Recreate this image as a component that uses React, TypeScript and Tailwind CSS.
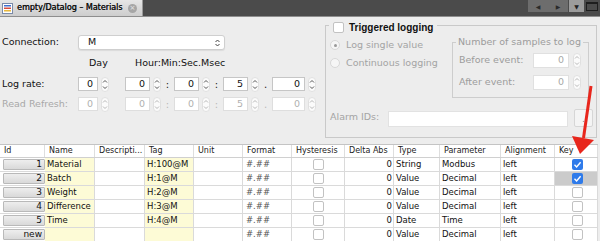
import React from "react";

type Row = {
    id: string;
    name: string;
    tag: string;
    type: string;
    param: string;
    key?: boolean;
    selected?: boolean;
};

const rows: Row[] = [
    { id: "1", name: "Material", tag: "H:100@M", type: "String", param: "Modbus", key: true },
    { id: "2", name: "Batch", tag: "H:1@M", type: "Value", param: "Decimal", key: true, selected: true },
    { id: "3", name: "Weight", tag: "H:2@M", type: "Value", param: "Decimal" },
    { id: "4", name: "Difference", tag: "H:3@M", type: "Value", param: "Decimal" },
    { id: "5", name: "Time", tag: "H:4@M", type: "Date", param: "Time" },
    { id: "new", name: "", tag: "", type: "Value", param: "Decimal" },
];

const headers = ["Id", "Name", "Descripti...", "Tag", "Unit", "Format", "Hysteresis", "Delta Abs", "Type", "Parameter", "Alignment", "Key"];

const gridCols = "grid grid-cols-[45px_50px_50px_49px_49px_49px_53px_49px_46px_61px_54px_43px]";

function Arrows({ disabled }: { disabled?: boolean }) {
    const c = disabled ? "#b8b8b8" : "#555";
    return (
        <svg width="8" height="15" viewBox="0 0 8 15" className="shrink-0">
            <rect x="0.5" y="0.5" width="7" height="14" rx="3.5" fill="#fbfbfb" stroke="#e0e0e0" />
            <path d="M2 5.5 L4 3.5 L6 5.5" fill="none" stroke={c} strokeWidth="1" />
            <path d="M2 9.5 L4 11.5 L6 9.5" fill="none" stroke={c} strokeWidth="1" />
        </svg>
    );
}

function Spin({ value, w, disabled }: { value: string; w: string; disabled?: boolean }) {
    return (
        <div className="flex items-center gap-[3px]">
            <div
                className={`${w} h-[14px] bg-white border flex items-center justify-end pr-[4px] text-[9.5px] ${
                    disabled ? "border-[#dedede] text-[#b0b0b0]" : "border-[#c6c6c6] text-[#111]"
                }`}
            >
                {value}
            </div>
            <Arrows disabled={disabled} />
        </div>
    );
}

function Sep({ ch, disabled }: { ch: string; disabled?: boolean }) {
    return (
        <div className={`w-[13px] text-center text-[10px] ${disabled ? "text-[#b8b8b8]" : "text-[#222]"}`}>{ch}</div>
    );
}

function RateRow({ label, disabled }: { label: string; disabled?: boolean }) {
    return (
        <div className="flex items-center h-[14px]">
            <div className={`w-[76px] text-[9.5px] ${disabled ? "text-[#a8a8a8]" : "text-[#111]"}`}>{label}</div>
            <Spin value="0" w="w-[20px]" disabled={disabled} />
            <div className="w-[16px]" />
            <Spin value="0" w="w-[25px]" disabled={disabled} />
            <Sep ch=":" disabled={disabled} />
            <Spin value="0" w="w-[25px]" disabled={disabled} />
            <Sep ch=":" disabled={disabled} />
            <Spin value="5" w="w-[25px]" disabled={disabled} />
            <Sep ch="." disabled={disabled} />
            <Spin value="0" w="w-[33px]" disabled={disabled} />
        </div>
    );
}

function CheckBox({ checked }: { checked?: boolean }) {
    if (checked) {
        return (
            <svg width="11" height="11" viewBox="0 0 11 11">
                <rect x="0" y="0" width="11" height="11" rx="2" fill="#2f7bea" />
                <path d="M2.5 5.8 L4.6 7.9 L8.6 3.2" fill="none" stroke="#fff" strokeWidth="1.4" />
            </svg>
        );
    }
    return <div className="w-[11px] h-[11px] rounded-[2px] bg-white border border-[#c2c2c2]" />;
}

function Radio({ label, on }: { label: string; on?: boolean }) {
    return (
        <div className="flex items-center h-[14px] gap-[6px]">
            <div className="w-[10px] h-[10px] rounded-full bg-[#f6f6f6] border border-[#d8d8d8] flex items-center justify-center">
                {on && <div className="w-[3px] h-[3px] rounded-full bg-[#9a9a9a]" />}
            </div>
            <span className="text-[9.5px] text-[#a4a4a4]">{label}</span>
        </div>
    );
}

function TopBar() {
    return (
        <div className="flex h-[17px] bg-[#4b4b4b] border-b border-[#8e8e8e]">
            <div className="w-[143px] h-[16px] flex items-center bg-gradient-to-b from-[#e6e6e6] to-[#cdcdcd] border-r border-[#9a9a9a]">
                <svg width="11" height="11" viewBox="0 0 11 11" className="ml-[2px]">
                    <rect x="0.5" y="0.5" width="10" height="10" fill="#fff" stroke="#7a8aa8" />
                    <rect x="2" y="2" width="7" height="1.5" fill="#3f6fd0" />
                    <rect x="2" y="4.5" width="7" height="1.5" fill="#d94b3a" />
                    <rect x="2" y="7" width="7" height="1.5" fill="#e8b83a" />
                </svg>
                <span className="ml-[4px] text-[8px] text-[#111] whitespace-nowrap [text-shadow:0.3px_0_0_#111]">
                    empty/Datalog – Materials
                </span>
                <div className="ml-auto mr-[5px] w-[9px] h-[9px] rounded-full bg-[#a6a6a6] flex items-center justify-center">
                    <span className="text-[7px] leading-none text-[#e8e8e8]">×</span>
                </div>
            </div>
            <div className="flex-1" />
            <div className="flex items-start gap-[1px] mr-[1px]">
                <div className="w-[40px] h-[12px] bg-[#6d6d6d] flex items-center justify-around text-[6px] text-[#2a2a2a]">
                    <span>◀</span>
                    <span>▶</span>
                </div>
                <div className="w-[15px] h-[12px] bg-[#9c9c9c] flex items-center justify-center text-[6px] text-[#222]">▼</div>
                <div className="w-[14px] h-[12px] flex items-center justify-center">
                    <div className="w-[12px] h-[9px] border border-[#1e1e1e] border-t-[2px]" />
                </div>
            </div>
        </div>
    );
}

function LeftForm() {
    return (
        <div className="w-[325px] pl-[2px] pt-[18px] flex flex-col">
            <div className="flex items-center h-[15px]">
                <div className="w-[76px] text-[9.5px] text-[#111]">Connection:</div>
                <div className="w-[147px] h-[15px] bg-white border border-[#cfcfcf] rounded-[3px] shadow-[0_1px_1px_rgba(0,0,0,0.08)] flex items-center pl-[9px] pr-[3px]">
                    <span className="text-[9.5px] text-[#111]">M</span>
                    <svg width="7" height="10" viewBox="0 0 7 10" className="ml-auto">
                        <path d="M1.5 4 L3.5 2 L5.5 4" fill="none" stroke="#444" strokeWidth="1" />
                        <path d="M1.5 6 L3.5 8 L5.5 6" fill="none" stroke="#444" strokeWidth="1" />
                    </svg>
                </div>
            </div>
            <div className="flex items-center h-[12px] mt-[7px] text-[9.5px] text-[#111]">
                <div className="w-[87px]" />
                <div className="w-[46px]">Day</div>
                <div>Hour:Min:Sec.Msec</div>
            </div>
            <div className="mt-[8px]">
                <RateRow label="Log rate:" />
            </div>
            <div className="mt-[6px]">
                <RateRow label="Read Refresh:" disabled />
            </div>
        </div>
    );
}

function SampleRow({ label }: { label: string }) {
    return (
        <div className="flex items-center h-[15px] pl-[6px]">
            <div className="w-[74px] text-[9.5px] text-[#9c9c9c]">{label}</div>
            <div className="w-[36px] h-[15px] bg-white border border-[#e0e0e0] flex items-center justify-end pr-[4px] text-[9.5px] text-[#a8a8a8]">
                0
            </div>
            <div className="ml-[4px]">
                <Arrows disabled />
            </div>
        </div>
    );
}

function TriggerGroup() {
    return (
        <div className="mt-[8px] w-[272px] h-[113px] border border-[#c9c9c9] flex flex-col">
            <div className="-mt-[7px] ml-[3px] self-start h-[16px] px-[4px] bg-[#ededed] flex items-center gap-[5px]">
                <CheckBox />
                <span className="text-[10px] font-bold text-[#111] font-['Liberation_Sans',sans-serif]">Triggered logging</span>
            </div>
            <div className="flex mt-[7px]">
                <div className="w-[126px] pl-[4px] -mt-[4px] flex flex-col gap-[4px]">
                    <Radio label="Log single value" on />
                    <Radio label="Continuous logging" />
                </div>
                <div className="w-[137px] h-[56px] border border-[#cdcdcd] flex flex-col">
                    <div className="-mt-[7px] ml-[3px] self-start h-[12px] px-[2px] bg-[#ededed] text-[9.5px] text-[#9c9c9c] flex items-center whitespace-nowrap">
                        Number of samples to log
                    </div>
                    <div className="mt-[5px]">
                        <SampleRow label="Before event:" />
                    </div>
                    <div className="mt-[7px]">
                        <SampleRow label="After event:" />
                    </div>
                </div>
            </div>
            <div className="flex items-center mt-[10px] h-[19px] pl-[4px]">
                <div className="w-[58px] text-[9.5px] text-[#a4a4a4]">Alarm IDs:</div>
                <div className="w-[180px] h-[16px] self-end bg-white border border-[#e2e2e2]" />
                <div className="ml-[6px] w-[19px] h-[18px] bg-[#f4f4f4] border border-[#d6d6d6] rounded-[2px] flex items-end justify-center pb-[2px] text-[8px] leading-none text-[#777]">
                    .
                </div>
            </div>
        </div>
    );
}

function Table() {
    const cell = "h-[14px] border-r border-b border-[#dadada] flex items-center text-[8.5px] text-[#111] whitespace-nowrap overflow-hidden";
    const yellow = "bg-[#fdfbd6]";
    return (
        <div className="w-[598px] border-t border-[#c4c4c4] bg-white">
            <div className={`${gridCols} h-[13px] border-b border-[#d0d0d0]`}>
                {headers.map((h) => (
                    <div key={h} className="border-r border-[#dedede] pl-[4px] flex items-center text-[8px] text-[#222] whitespace-nowrap overflow-hidden">
                        {h}
                    </div>
                ))}
            </div>
            {rows.map((r) => (
                <div key={r.id} className={gridCols}>
                    <div className="h-[14px] py-[1px] pl-[3px] border-b border-[#dadada]">
                        <div className="h-full bg-gradient-to-b from-[#eeeeee] to-[#d9d9d9] border border-[#b9b9b9] rounded-[1px] flex items-center justify-end pr-[2px] text-[9px] text-[#111]">
                            {r.id}
                        </div>
                    </div>
                    <div className={`${cell} ${yellow} pl-[2px]`}>{r.name}</div>
                    <div className={cell} />
                    <div className={`${cell} ${yellow} pl-[2px]`}>{r.tag}</div>
                    <div className={cell} />
                    <div className={`${cell} pl-[3px] text-[#555]`}>#.##</div>
                    <div className={`${cell} justify-center`}>
                        <CheckBox />
                    </div>
                    <div className={`${cell} justify-end pr-[1px]`}>0</div>
                    <div className={`${cell} pl-[2px]`}>{r.type}</div>
                    <div className={`${cell} pl-[2px]`}>{r.param}</div>
                    <div className={`${cell} pl-[2px]`}>left</div>
                    <div className={`${cell} justify-center pl-[2px] ${r.selected ? "bg-[#cbcbcb]" : ""}`}>
                        <CheckBox checked={r.key} />
                    </div>
                </div>
            ))}
        </div>
    );
}

export default function App() {
    return (
        <div className="relative w-[600px] h-[241px] overflow-hidden bg-[#ededed] font-['DejaVu_Sans',sans-serif]">
            <TopBar />
            <div className="flex h-[127px]">
                <LeftForm />
                <TriggerGroup />
            </div>
            <Table />
            {/* red pointer over the Key column */}
            <svg className="absolute left-[560px] top-[80px]" width="40" height="80" viewBox="0 0 40 80">
                <path d="M31 6 L23.5 58" stroke="#e8261c" strokeWidth="3" fill="none" />
                <path d="M12 56 L34 60 L20 74 Z" fill="#e8261c" />
            </svg>
        </div>
    );
}
